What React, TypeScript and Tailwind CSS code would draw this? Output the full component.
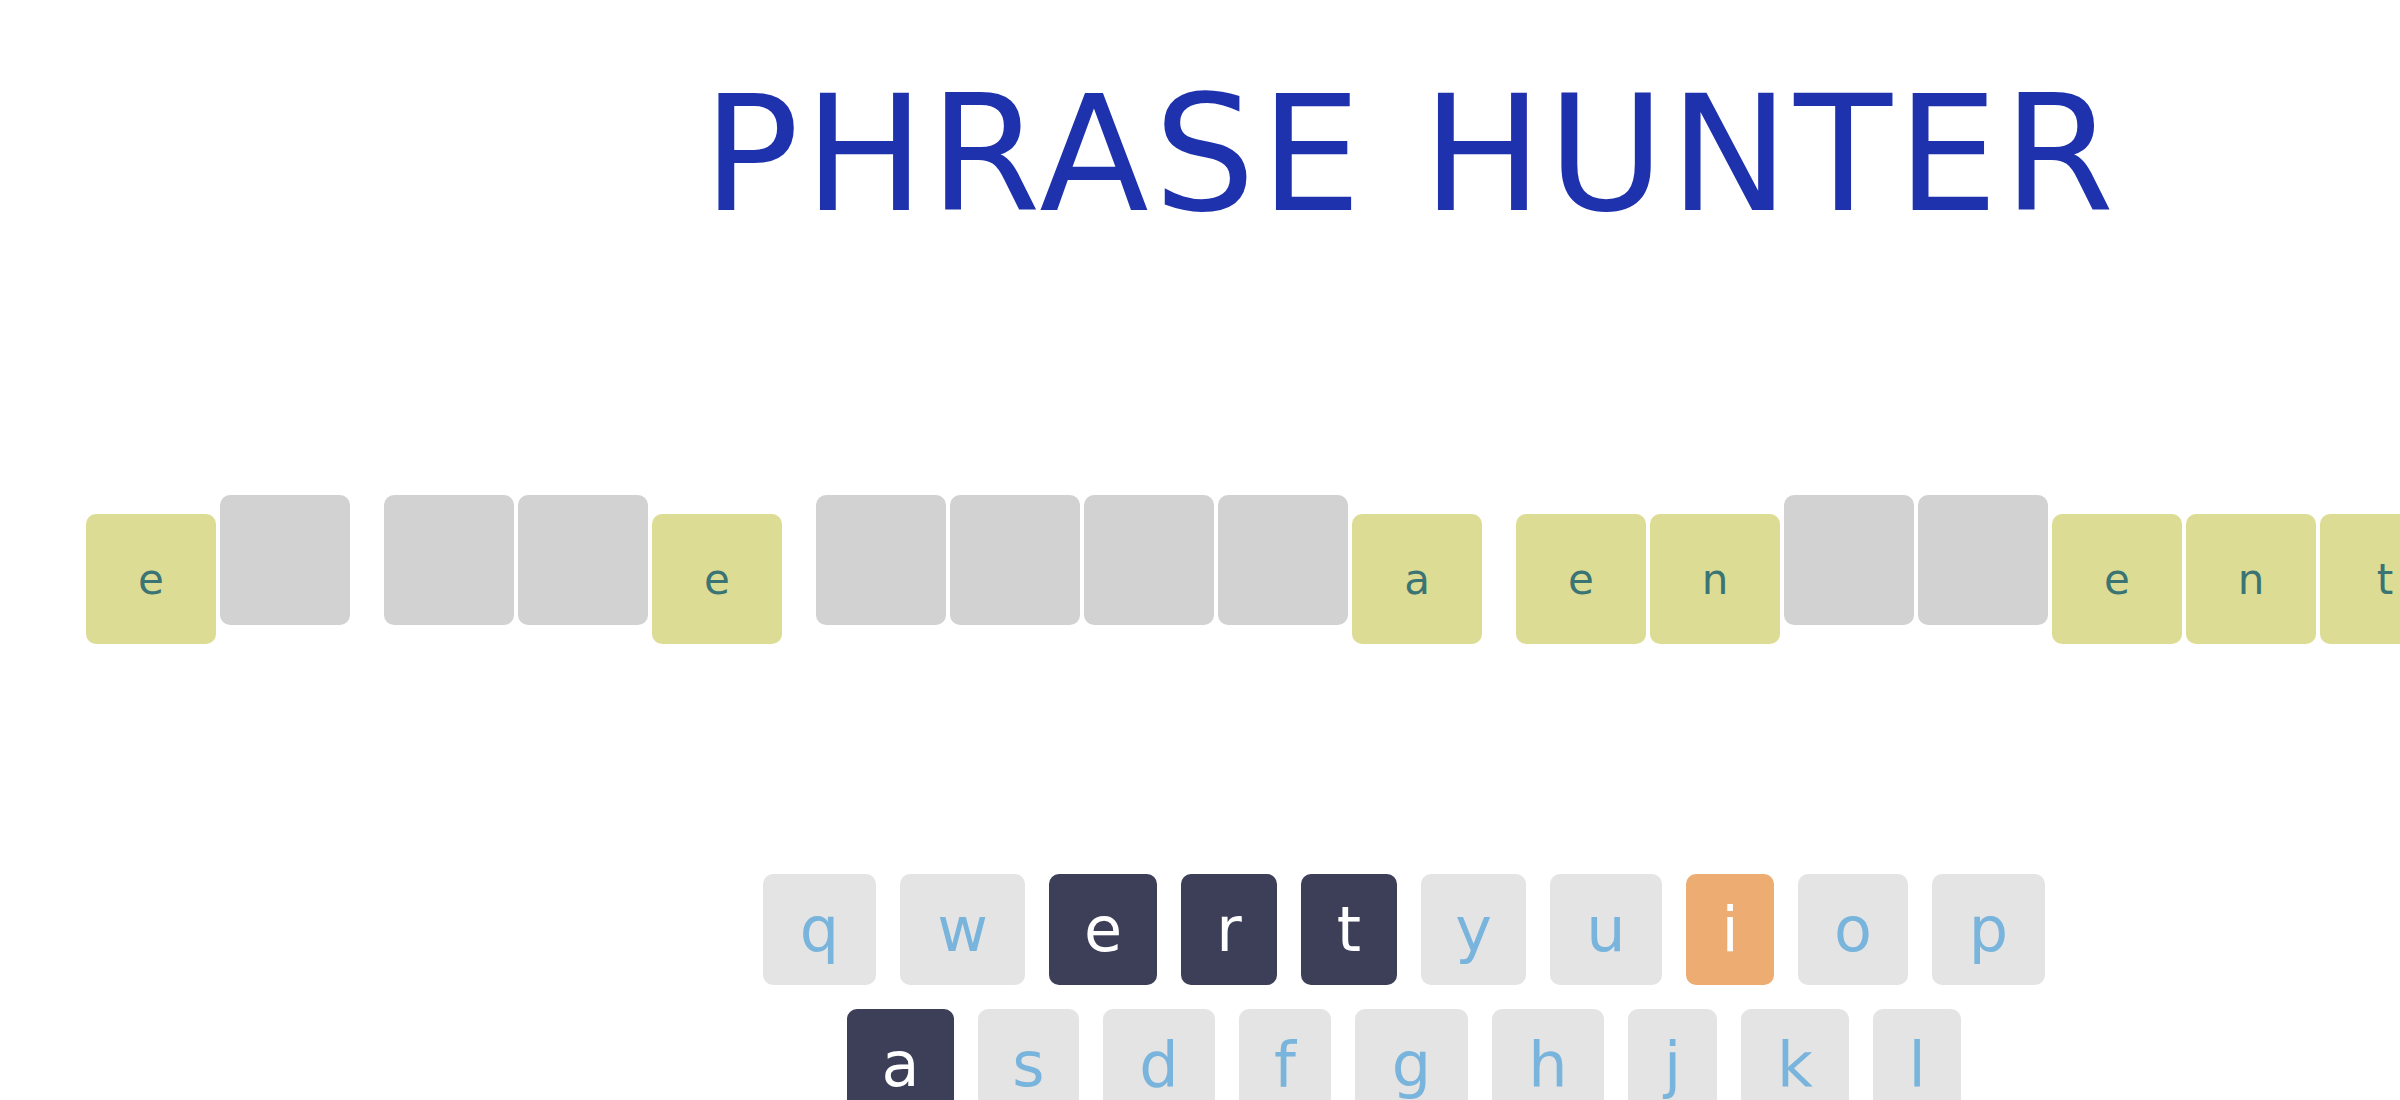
import React from 'react';

type KeyState = 'idle' | 'chosen' | 'hover';

const phrase: (string | null)[][] = [
  ['e', null],
  [null, null, 'e'],
  [null, null, null, null, 'a'],
  ['e', 'n', null, null, 'e', 'n', 't'],
];

const rows: { letter: string; w: string; state: KeyState }[][] = [
  [
    { letter: 'q', w: 'w-[113px]', state: 'idle' },
    { letter: 'w', w: 'w-[125px]', state: 'idle' },
    { letter: 'e', w: 'w-[108px]', state: 'chosen' },
    { letter: 'r', w: 'w-[96px]', state: 'chosen' },
    { letter: 't', w: 'w-[96px]', state: 'chosen' },
    { letter: 'y', w: 'w-[105px]', state: 'idle' },
    { letter: 'u', w: 'w-[112px]', state: 'idle' },
    { letter: 'i', w: 'w-[88px]', state: 'hover' },
    { letter: 'o', w: 'w-[110px]', state: 'idle' },
    { letter: 'p', w: 'w-[113px]', state: 'idle' },
  ],
  [
    { letter: 'a', w: 'w-[107px]', state: 'chosen' },
    { letter: 's', w: 'w-[101px]', state: 'idle' },
    { letter: 'd', w: 'w-[112px]', state: 'idle' },
    { letter: 'f', w: 'w-[92px]', state: 'idle' },
    { letter: 'g', w: 'w-[113px]', state: 'idle' },
    { letter: 'h', w: 'w-[112px]', state: 'idle' },
    { letter: 'j', w: 'w-[89px]', state: 'idle' },
    { letter: 'k', w: 'w-[108px]', state: 'idle' },
    { letter: 'l', w: 'w-[88px]', state: 'idle' },
  ],
  [
    { letter: 'z', w: 'w-[102px]', state: 'idle' },
    { letter: 'x', w: 'w-[104px]', state: 'idle' },
    { letter: 'c', w: 'w-[104px]', state: 'idle' },
    { letter: 'v', w: 'w-[104px]', state: 'idle' },
    { letter: 'b', w: 'w-[113px]', state: 'idle' },
    { letter: 'n', w: 'w-[112px]', state: 'idle' },
    { letter: 'm', w: 'w-[136px]', state: 'idle' },
  ],
];

const keyColors: Record<KeyState, string> = {
  idle: 'bg-[#e4e4e4] text-[#78b4dc]',
  chosen: 'bg-[#3c3f57] text-white',
  hover: 'bg-[#ecac72] text-white',
};

const PhraseHunter = () => {
  return (
    <div className="h-[1100px] w-full overflow-hidden bg-white font-['DejaVu_Sans',sans-serif]">
      <div className="w-[2808px] flex flex-col items-center">
        <h1 className="mt-[75px] ml-[14px] text-[160px] leading-[160px] font-normal tracking-[5px] text-[#1f32ad]">
          PHRASE HUNTER
        </h1>

        {/* Phrase */}
        <ul className="mt-[260px] self-start ml-[86px] flex items-start gap-[4px]">
          {phrase.map((word, wi) => (
            <React.Fragment key={wi}>
              {wi > 0 && <li className="w-[26px] shrink-0" />}
              {word.map((ch, ci) =>
                ch ? (
                  <li
                    key={ci}
                    className="mt-[19px] w-[130px] h-[130px] shrink-0 rounded-[10px] bg-[#dcdc94] text-[#3b7474] text-[42px] flex items-center justify-center"
                  >
                    {ch}
                  </li>
                ) : (
                  <li key={ci} className="w-[130px] h-[130px] shrink-0 rounded-[10px] bg-[#d2d2d2]" />
                )
              )}
            </React.Fragment>
          ))}
        </ul>

        {/* Keyboard */}
        <div className="mt-[230px] flex flex-col items-center gap-[24px]">
          {rows.map((row, ri) => (
            <div key={ri} className="flex gap-[24px]">
              {row.map(({ letter, w, state }) => (
                <button
                  key={letter}
                  className={`${w} ${keyColors[state]} h-[111px] rounded-[10px] text-[62px] flex items-center justify-center`}
                >
                  {letter}
                </button>
              ))}
            </div>
          ))}
        </div>
      </div>
    </div>
  );
};

export default PhraseHunter;
